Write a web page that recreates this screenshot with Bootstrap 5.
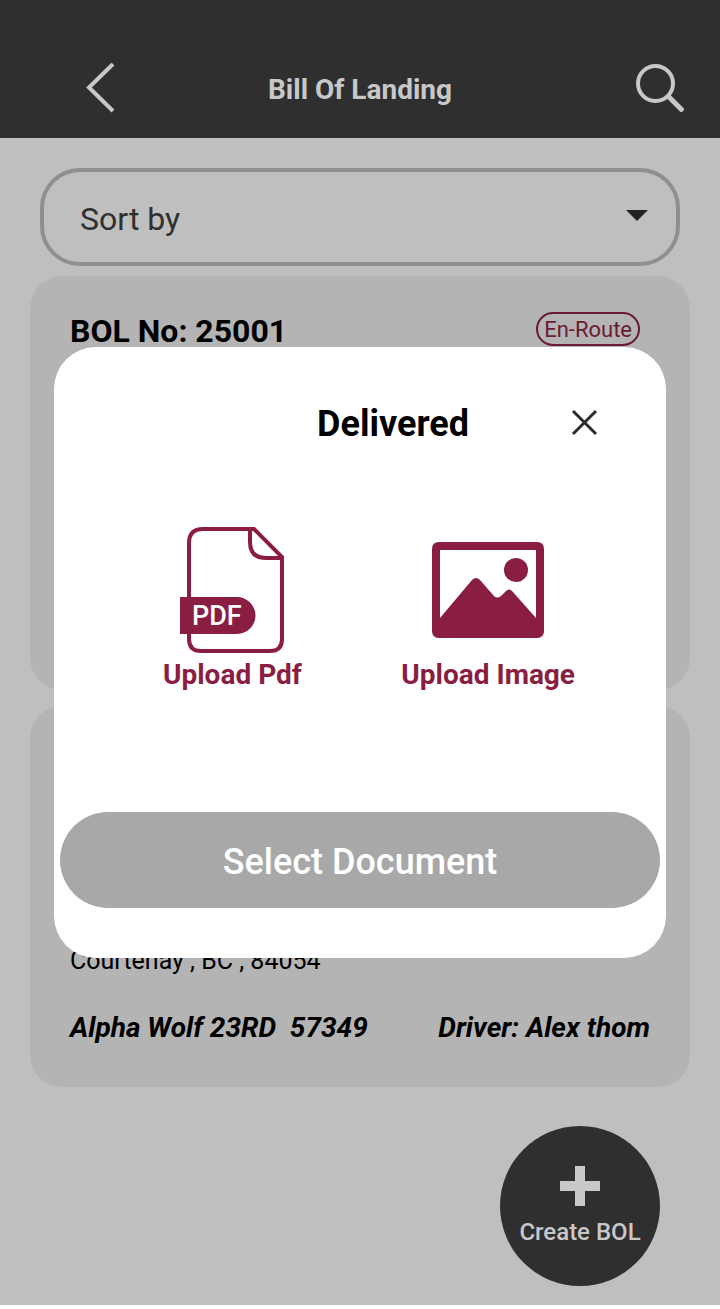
<!DOCTYPE html>
<html lang="en">
<head>
<meta charset="utf-8">
<meta name="viewport" content="width=device-width, initial-scale=1">
<title>Bill Of Landing</title>
<link href="https://cdn.jsdelivr.net/npm/bootstrap@5.3.0/dist/css/bootstrap.min.css" rel="stylesheet">
<style>
  body { font-family: Roboto, sans-serif; color: #000; background: #fff; line-height: 1.2; }
  .screen { min-height: calc(100vh - 4px); background: #bfbfbf; }
  .topbar { display: grid; grid-template-columns: 1fr auto 1fr; padding: 48px 36px 10px; min-height: 138px; background: #2f2f2f; color: #c8c8c8; }
  .topbar h1 { padding-top: 4px; font-size: 28px; font-weight: 700; line-height: 32px; }
  .icon-btn { padding: 0; border: 0; background: none; color: inherit; line-height: 0; }
  .back-btn { margin-left: 40px; }
  .sort-wrap { padding: 30px 40px 10px; }
  .sort-select {
    height: 98px; padding: 4px 36px 0; border: 4px solid #8f8f8f; border-radius: 40px;
    color: #2f2f2f; font-size: 32px; background-color: transparent;
    background-image: url("data:image/svg+xml,%3Csvg xmlns='http://www.w3.org/2000/svg' viewBox='0 0 22 11'%3E%3Cpath fill='%23222' d='M0 0h22L11 11z'/%3E%3C/svg%3E");
    background-size: 22px 11px; background-position: right 28px top 38px;
  }
  .bol-list { padding: 0 30px; gap: 16px; }
  .bol-card { padding: 36px 40px 43px; border-radius: 32px; background: #b4b4b4; }
  .bol-first { min-height: 414px; }
  .bol-second { min-height: 381px; }
  .bol-title { font-size: 32px; font-weight: 700; line-height: 38px; }
  .route-pill { height: 34px; margin-right: 10px; padding: 0 6px; border: 2px solid #6b1a36; border-radius: 17px; color: #6b1a36; font-size: 22px; line-height: 32px; }
  .bol-address { font-size: 25px; font-weight: 400; line-height: 30px; margin-bottom: 36px; }
  .bol-meta { font-size: 28px; font-weight: 700; font-style: italic; line-height: 32px; white-space: pre; }
  .create-btn { right: 60px; bottom: 19px; width: 160px; height: 160px; padding: 0; gap: 12px; border: 0; border-radius: 50%; background: #2f2f2f; color: #c8c8c8; font-size: 24px; font-weight: 500; line-height: 28px; }
  .delivered { width: 85%; min-height: 611px; padding: 52px 6px 50px; border-radius: 42px; background: #fff; }
  .delivered-head { padding: 0 62px; gap: 101px; }
  .delivered h2 { padding-top: 4px; font-size: 36px; font-weight: 700; line-height: 42px; }
  .upload-row { padding: 0 85px 0 103px; margin-top: 79px; }
  .upload-btn { padding: 0; border: 0; background: none; color: #891e42; font-size: 28px; font-weight: 700; line-height: 36px; }
  .select-btn { height: 96px; padding: 6px 0 0; border: 0; border-radius: 48px; background: #a8a8a8; color: #fff; font-size: 36px; font-weight: 500; }
</style>
</head>
<body>
<div class="screen position-relative">
  <header class="topbar align-items-center">
    <button class="icon-btn back-btn text-start" type="button" aria-label="Back">
      <svg width="48" height="50" viewBox="0 0 48 50" fill="none" stroke="currentColor" stroke-width="4"><path d="M37 1 13 24.500 37 48"/></svg>
    </button>
    <h1 class="mb-0">Bill Of Landing</h1>
    <button class="icon-btn text-end" type="button" aria-label="Search">
      <svg width="48" height="48" viewBox="0 0 48 48" fill="none" stroke="currentColor" stroke-width="4"><circle cx="19.500" cy="19.500" r="17.500"/><path d="m31 31 16 16" stroke-width="5"/></svg>
    </button>
  </header>

  <main>
    <div class="sort-wrap">
      <select class="form-select sort-select" aria-label="Sort by"><option>Sort by</option></select>
    </div>
    <div class="bol-list d-flex flex-column">
      <article class="bol-card bol-first">
        <div class="d-flex justify-content-between">
          <h2 class="bol-title mb-0">BOL No: 25001</h2>
          <span class="route-pill">En-Route</span>
        </div>
      </article>
      <article class="bol-card bol-second d-flex flex-column justify-content-end">
        <p class="bol-address">Courtenay , BC , 84054</p>
        <div class="bol-meta d-flex justify-content-between"><span>Alpha Wolf 23RD  57349</span><span>Driver: Alex thom</span></div>
      </article>
    </div>
  </main>

  <button class="create-btn position-absolute d-flex flex-column align-items-center justify-content-center" type="button">
    <svg width="40" height="40" viewBox="0 0 40 40" fill="currentColor"><path d="M15 0h10v15h15v10H25v15H15V25H0V15h15z"/></svg>
    <span>Create BOL</span>
  </button>

  <div class="position-absolute top-0 start-0 w-100 h-100 d-flex align-items-center justify-content-center">
    <section class="delivered d-flex flex-column" role="dialog" aria-labelledby="delivered-title">
      <div class="delivered-head d-flex align-items-center justify-content-end">
        <h2 id="delivered-title" class="mb-0">Delivered</h2>
        <button class="icon-btn" type="button" aria-label="Close">
          <svg width="28" height="28" viewBox="0 0 28 28" fill="none" stroke="#2b2b2b" stroke-width="3"><path d="m3 3 23 23M26 3 3 26"/></svg>
        </button>
      </div>
      <div class="upload-row d-flex justify-content-between align-items-end">
        <button class="upload-btn d-flex flex-column align-items-center" type="button">
          <svg width="104" height="133" viewBox="0 0 104 133" fill="none" stroke="#891e42" stroke-width="4">
            <path d="M9 79V19Q9 5 23 5H74L102 33V115Q102 127 90 127H21Q9 127 9 115V108"/>
            <path d="M70 5V18Q70 34 86 34H102"/>
            <path fill="#891e42" stroke="none" d="M0 73H57a18 18 0 0 1 0 37H0z"/>
            <text x="12" y="101" fill="#fff" stroke="none" font-family="Roboto, sans-serif" font-size="27" font-weight="500">PDF</text>
          </svg>
          Upload Pdf
        </button>
        <button class="upload-btn d-flex flex-column align-items-center" type="button">
          <svg width="112" height="115" viewBox="0 0 112 115" fill="#891e42">
            <path fill-rule="evenodd" d="M7 0H105Q112 0 112 7V89Q112 96 105 96H7Q0 96 0 89V7Q0 0 7 0ZM8 8V76L40 38Q44 34 48 38L62 54Q65 57 69 54L74 49Q77 46 80 49L104 76V8Z"/>
            <circle cx="84" cy="28" r="12"/>
          </svg>
          Upload Image
        </button>
      </div>
      <button class="select-btn w-100 mt-auto" type="button">Select Document</button>
    </section>
  </div>
</div>
<script src="https://cdn.jsdelivr.net/npm/bootstrap@5.3.0/dist/js/bootstrap.bundle.min.js"></script>
</body>
</html>
